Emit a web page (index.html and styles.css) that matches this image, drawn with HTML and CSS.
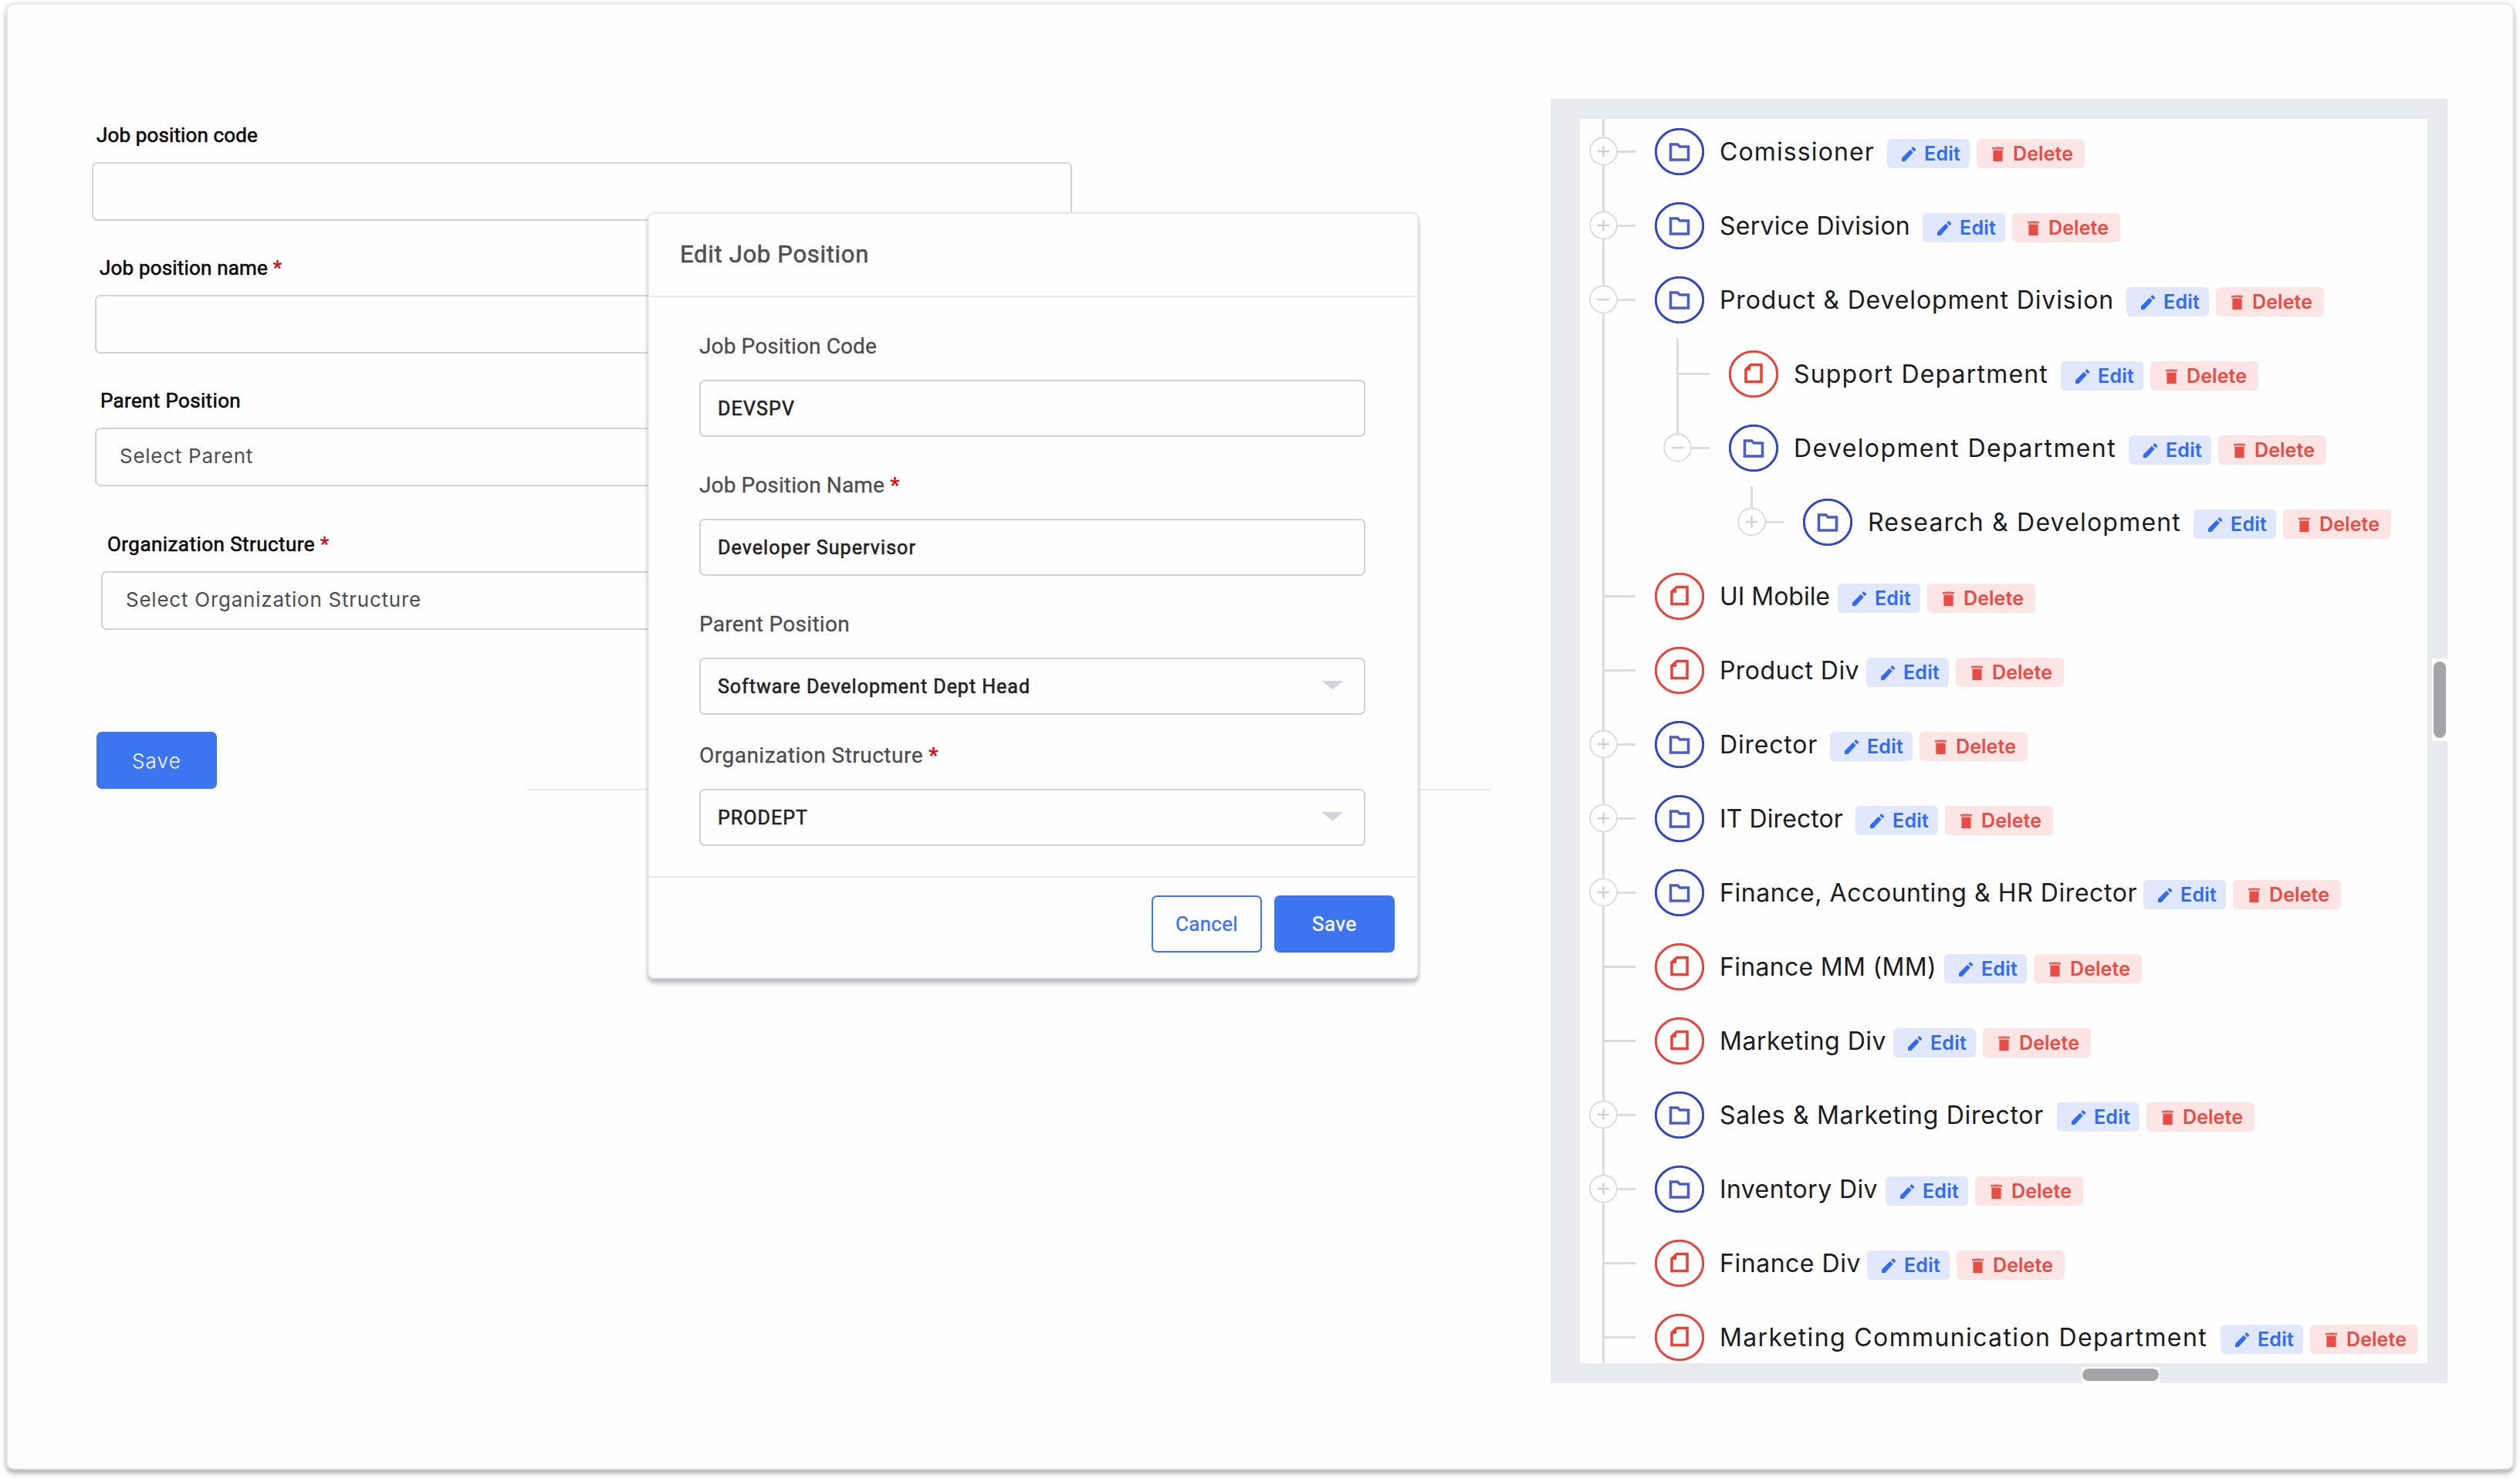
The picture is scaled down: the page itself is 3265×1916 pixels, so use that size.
FILE: index.html
```html
<!DOCTYPE html>
<html lang="en">
	<head>
		<meta charset="utf-8" />
		<title>Job Position</title>
		<link rel="stylesheet" href="styles.css">
	</head>
	<body>
		<div class="card">
			<form class="form">
				<div class="field field-code">
					<label><span data-w="209">Job position code</span></label>
					<div class="input"></div>
				</div>
				<div class="field field-name">
					<label><span data-w="218">Job position name</span> <i>*</i></label>
					<div class="input"></div>
				</div>
				<div class="field field-parent">
					<label><span data-w="182">Parent Position</span></label>
					<div class="input"><span data-w="173">Select Parent</span></div>
				</div>
				<div class="field field-org">
					<label><span data-w="269">Organization Structure</span> <i>*</i></label>
					<div class="input"><span data-w="383">Select Organization Structure</span></div>
				</div>
				<div class="form-footer">
					<button type="button" class="btn btn-thin"><span data-w="64">Save</span></button>
					<div class="line"></div>
				</div>
			</form>

			<div class="panel">
				<div class="panel-view">
					<ul class="tree" id="tree"></ul>
				</div>
				<div class="scroll scroll-y"></div>
				<div class="scroll scroll-x"></div>
			</div>

			<div class="modal">
				<div class="modal-head"><span data-w="245">Edit Job Position</span></div>
				<div class="modal-body">
					<div class="m-field">
						<label><span data-w="230">Job Position Code</span></label>
						<div class="m-input"><span data-w="100">DEVSPV</span></div>
					</div>
					<div class="m-field">
						<label><span data-w="240">Job Position Name</span> <i>*</i></label>
						<div class="m-input"><span data-w="257">Developer Supervisor</span></div>
					</div>
					<div class="m-field">
						<label><span data-w="195">Parent Position</span></label>
						<div class="m-input"><span data-w="405">Software Development Dept Head</span><b class="arrow"></b></div>
					</div>
					<div class="m-field m-last">
						<label><span data-w="290">Organization Structure</span> <i>*</i></label>
						<div class="m-input"><span data-w="117">PRODEPT</span><b class="arrow"></b></div>
					</div>
				</div>
				<div class="modal-foot">
					<button type="button" class="btn btn-line"><span data-w="81">Cancel</span></button>
					<button type="button" class="btn"><span data-w="58">Save</span></button>
				</div>
			</div>
		</div>
<script>
	//name, type, label width, gap before buttons, children
	var data = [
		['Comissioner','plus',201,16],
		['Service Division','plus',247,16],
		['Product & Development Division','minus',511,16,[
			['Support Department','leaf',330,16],
			['Development Department','minus',418,16,[
				['Research & Development','plus',406,16]
			]]
		]],
		['UI Mobile','leaf',143,10],
		['Product Div','leaf',181,9],
		['Director','plus',127,16],
		['IT Director','plus',160,16],
		['Finance, Accounting & HR Director','plus',541,8],
		['Finance MM (MM)','leaf',281,10],
		['Marketing Div','leaf',216,9],
		['Sales & Marketing Director','plus',420,17],
		['Inventory Div','plus',205,10],
		['Finance Div','leaf',183,8],
		['Marketing Communication Department','leaf',632,17]
	];

	var folder = '<svg class="node node-folder" viewBox="0 0 64 61"><ellipse cx="32" cy="30.5" rx="30.7" ry="29.2"/><path d="M20.5 21H29.5L32.500 24H43.500V41H20.500Z"/></svg>';
	var file = '<svg class="node node-file" viewBox="0 0 64 61"><ellipse cx="32" cy="30.5" rx="30.7" ry="29.2"/><path d="M28.500 18.500H42V40.500H22V24.500Z"/><path class="fold" d="M21 25L28 18V26H21Z"/></svg>';
	var pencil = '<svg class="ico ico-edit" viewBox="0 0 20 20"><path d="M0 20V15.500L11.500 4L15.500 8L4.500 20ZM13 2.600L15.500 0L19.500 4L17 6.500Z"/></svg>';
	var trash = '<svg class="ico ico-del" viewBox="0 0 16 20"><path class="lid" d="M0 1H4L5 0H11L12 1H16V4.500H0Z"/><path d="M1.500 5H14.500V20H1.500ZM0 1H16V2.500H0Z"/></svg>';

	function toggle(type){
		if(type == 'leaf'){
			return '<span class="leaf"></span>';
		}
		var d = type == 'plus' ? 'M11 19H26M18.500 11.500V26.500' : 'M11 19H26';
		return '<svg class="toggle" viewBox="0 0 37 38"><circle cx="18.5" cy="19" r="17.5"/><path d="' + d + '"/></svg><span class="dash"></span>';
	}

	function build(list){
		var html = '';
		for(var i=0;i<list.length;i++){
			var n = list[i];
			html += '<li><div class="row">' + toggle(n[1]) + (n[1] == 'leaf' ? file : folder)
				+ '<span class="name" data-w="' + n[2] + '">' + n[0].replace('&','&amp;') + '</span>'
				+ '<span class="badge edit" style="margin-left:' + n[3] + 'px">' + pencil + '<span data-w="47">Edit</span></span>'
				+ '<span class="badge del">' + trash + '<span data-w="78">Delete</span></span></div>';
			if(n[4]){
				html += '<ul>' + build(n[4]) + '</ul>';
			}
			html += '</li>';
		}
		return html;
	}
	document.getElementById('tree').innerHTML = build(data);

	//spread the letters over the width of the label
	var texts = document.querySelectorAll('[data-w]');
	for(var i=0;i<texts.length;i++){
		var t = texts[i];
		var w = Number(t.getAttribute('data-w'));
		var s = (w - t.getBoundingClientRect().width) / t.textContent.length;
		t.style.letterSpacing = s.toFixed(3) + 'px';
	}
</script>
	</body>
</html>
```
FILE: styles.css
```css
*{
	margin: 0;
	padding: 0;
	box-sizing: border-box;
}
body {
	height: 1916px;
	padding: 4px 8px 0;
	background: #fefefe;
	font-family: Roboto, "Liberation Sans", sans-serif;
	overflow: hidden;
}
ul {
	list-style: none;
}
i {
	color: #e8000f;
	font-style: normal;
	font-weight: 700;
}
[data-w] {
	display: inline-block;
	white-space: nowrap;
	flex: none;
}
.card {
	position: relative;
	display: flex;
	justify-content: space-between;
	align-items: flex-start;
	width: 3249px;
	height: 1900px;
	padding: 122px 84px 0 109px;
	border: 2px solid #e9e9eb;
	border-radius: 10px;
	background: #fefefe;
	box-shadow: 0 5px 6px rgba(0,0,0,.28), 0 0 7px rgba(0,0,0,.08);
}

/* left form */
.form {
	width: 1820px;
	padding-top: 32px;
}
.field {
	width: 1270px;
	margin-bottom: 46px;
}
.field label {
	display: block;
	height: 50px;
	padding-left: 6px;
	font-size: 26px;
	line-height: 30px;
	color: #0a0a0c;
	-webkit-text-stroke: .6px #0a0a0c;
}
.field label i, .m-field label i {
	-webkit-text-stroke: 0;
}
.field-name, .field-parent {
	margin-left: 4px;
}
.field-parent label {
	padding-left: 7px;
}
.field-parent {
	margin-bottom: 60px;
}
.field-org {
	margin-left: 12px;
	margin-bottom: 132px;
}
.field-org label {
	padding-left: 8px;
}
.input {
	height: 76px;
	padding-left: 30px;
	border: 2px solid #d0d3dd;
	border-radius: 7px;
	font-family: Inter, sans-serif;
	font-size: 26px;
	line-height: 70px;
	color: #4d4d50;
}
.form-footer {
	display: flex;
	height: 76px;
	padding-left: 6px;
}
.line {
	align-self: flex-end;
	width: 1248px;
	height: 2px;
	margin-left: 402px;
	background: #e9e9ec;
}
.btn {
	width: 156px;
	height: 74px;
	border: 2px solid #3d74ef;
	border-radius: 7px;
	background: #3d74ef;
	color: #fff;
	font-family: Roboto, sans-serif;
	font-size: 26px;
	-webkit-text-stroke: .4px currentColor;
}
.btn-thin {
	font-family: Inter, sans-serif;
	font-size: 26px;
	font-weight: 300;
	-webkit-text-stroke: 0;
}
.btn-line {
	width: 143px;
	background: #fefefe;
	color: #3d74ef;
}

/* edit modal */
.modal {
	position: absolute;
	left: 829px;
	top: 269px;
	width: 999px;
	height: 993px;
	border: 2px solid #e9e9ec;
	border-radius: 8px;
	background: #fefefe;
	box-shadow: 0 6px 5px rgba(40,40,60,.28), 0 0 4px rgba(0,0,0,.08);
}
.modal-head {
	height: 108px;
	padding-left: 40px;
	border-bottom: 2px solid #ececee;
	font-size: 31px;
	line-height: 106px;
	color: #505053;
	-webkit-text-stroke: .6px #505053;
}
.modal-body {
	height: 750px;
	padding: 47px 67px 0 65px;
}
.m-field {
	height: 180px;
}
.m-field:nth-child(3) {
	height: 170px;
}
.m-field label {
	display: block;
	height: 60px;
	font-size: 28px;
	line-height: 33px;
	color: #4d4d50;
	-webkit-text-stroke: .3px #4d4d50;
}
.m-input {
	display: flex;
	justify-content: space-between;
	align-items: center;
	height: 74px;
	padding: 0 26px 0 22px;
	border: 2px solid #d0d3dd;
	border-radius: 7px;
	font-size: 25px;
	color: #222226;
	-webkit-text-stroke: .6px #222226;
}
.arrow {
	width: 29px;
	height: 12px;
	margin-top: -3px;
	background: #d2d3dc;
	clip-path: polygon(0 0, 100% 0, 50% 100%);
}
.modal-foot {
	display: flex;
	justify-content: flex-end;
	gap: 16px;
	padding: 23px 29px 0 0;
	border-top: 2px solid #ececf0;
}

/* organization tree */
.panel {
	position: relative;
	width: 1162px;
	height: 1664px;
	padding: 26px 26px 26px 38px;
	background: #e9eaee;
}
.panel-view {
	height: 1612px;
	background: #fefefe;
	overflow: hidden;
}
.tree {
	margin-top: -6px;
	font-family: Inter, sans-serif;
}
.tree ul {
	margin-left: 96px;
}
.tree li {
	position: relative;
}
.tree li::before {
	content: "";
	position: absolute;
	left: 29px;
	top: 0;
	bottom: 0;
	width: 3px;
	background: #dcdbde;
}
.tree ul li:first-child::before {
	top: 2px;
}
.tree ul li:last-child::before {
	bottom: auto;
	height: 48px;
}
.row {
	position: relative;
	display: flex;
	align-items: center;
	height: 96px;
	padding-left: 12px;
}
.toggle {
	flex: none;
	width: 37px;
	height: 38px;
	fill: #fefefe;
	stroke: #dddcdf;
	stroke-width: 2;
}
.toggle path {
	stroke: #d2d1d5;
	stroke-width: 2.5;
}
.dash {
	width: 23px;
	height: 3px;
	background: #dcdbde;
}
.leaf {
	width: 40px;
	height: 3px;
	margin-left: 20px;
	background: #dcdbde;
}
.node {
	flex: none;
	width: 64px;
	height: 61px;
	margin: 0 20px 0 25px;
	fill: none;
	stroke-width: 3;
}
.node path {
	stroke-width: 3.6;
}
.node-folder {
	stroke: #3048c0;
}
.node-folder path {
	stroke: #4a5fc8;
}
.node-file {
	stroke: #ea4438;
}
.node-file .fold {
	fill: #ea4438;
	stroke: none;
}
.name {
	padding-top: 1px;
	font-size: 32px;
	line-height: 40px;
	color: #1b1c22;
}
.badge {
	display: flex;
	align-items: center;
	flex: none;
	height: 38px;
	margin-top: 6px;
	border-radius: 6px;
	font-size: 25px;
	line-height: 38px;
	font-weight: 600;
}
.edit {
	width: 107px;
	padding-left: 19px;
	background: #e1e7fd;
	color: #2f6bf3;
}
.del {
	width: 140px;
	margin-left: 9px;
	padding-left: 20px;
	background: #fde4e5;
	color: #e84c42;
}
.ico {
	flex: none;
	fill: currentColor;
}
.ico-edit {
	width: 19px;
	height: 19px;
	margin-right: 10px;
}
.ico-del {
	width: 15px;
	height: 19px;
	margin-right: 12px;
}
.lid {
	opacity: .5;
}
.scroll {
	position: absolute;
	padding: 4px 2px;
	background: #fefefe;
}
.scroll::before {
	content: "";
	display: block;
	height: 100%;
	border-radius: 8px;
	background: #a5a5a9;
}
.scroll-y {
	right: 0;
	top: 725px;
	width: 20px;
	height: 107px;
}
.scroll-x {
	left: 688px;
	bottom: 0;
	width: 101px;
	height: 21px;
	padding: 2px 1px 3px;
}
```
